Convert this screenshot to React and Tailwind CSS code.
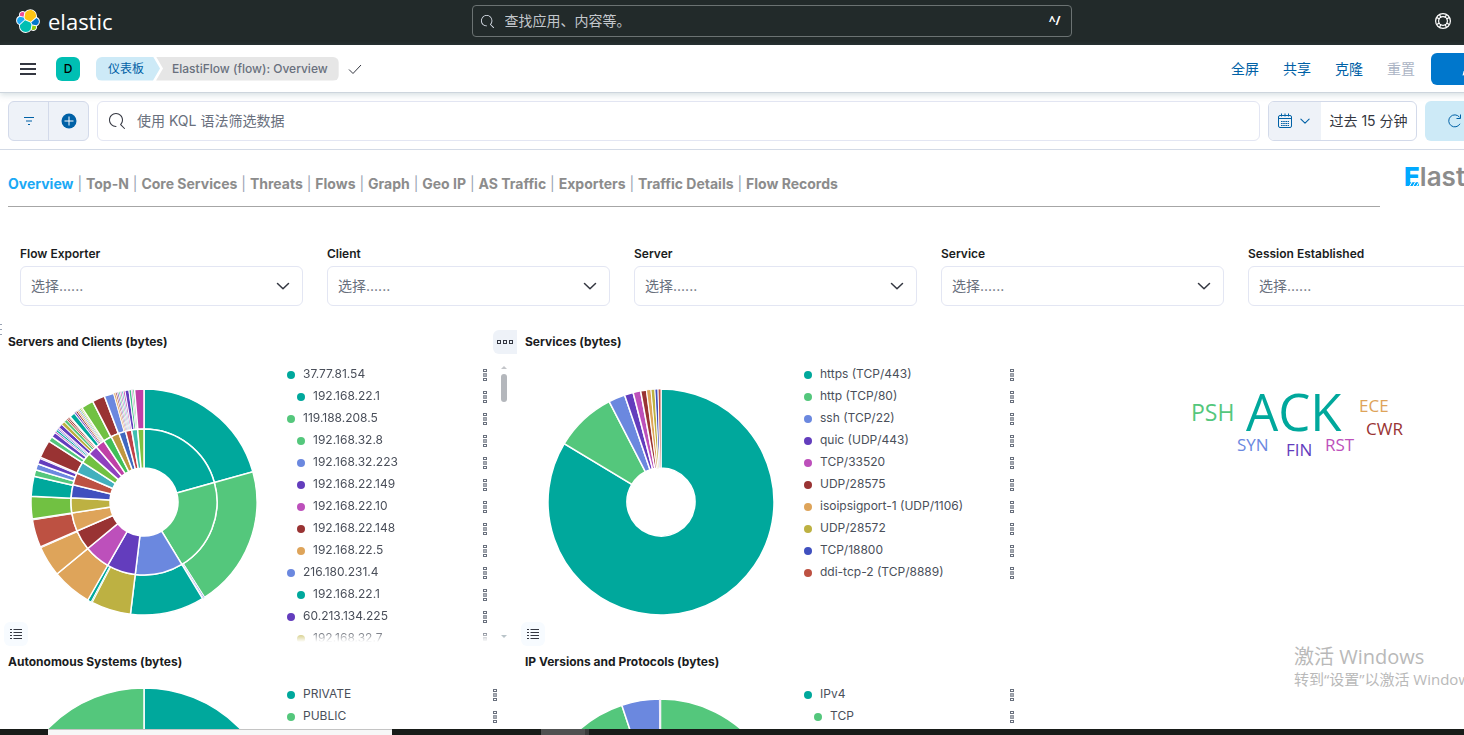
import React from "react";

const SERVER_INNER = [
  [0, 74.5, "#00a89c"],
  [74.5, 148.8, "#54c77c"],
  [148.8, 186.9, "#6b88df"],
  [186.9, 209.8, "#633dbd"],
  [209.8, 230.4, "#bd50bb"],
  [230.4, 246.6, "#993333"],
  [246.6, 261.4, "#dea45a"],
  [261.4, 273.3, "#bdb142"],
  [273.3, 283.7, "#4050bf"],
  [283.7, 293.4, "#bd5142"],
  [293.4, 302.8, "#42b0bd"],
  [302.8, 311.2, "#71c142"],
  [311.2, 319.1, "#8f40bf"],
  [319.1, 326.7, "#bf40a7"],
  [326.7, 333.4, "#40bf58"],
  [333.4, 340, "#bf9740"],
  [340, 345.4, "#4068bf"],
  [345.4, 350.3, "#bf4048"],
  [350.3, 355, "#40bfb0"],
  [355, 360, "#80bf40"],
];

const SERVER_OUTER = [
  [0, 74.5, "#00a89c"],
  [74.5, 147.6, "#54c77c"],
  [147.6, 148.3, "#6b88df"],
  [148.3, 148.8, "#633dbd"],
  [148.8, 186.9, "#00a89c"],
  [186.9, 207.4, "#bdb142"],
  [207.4, 207.9, "#54c77c"],
  [207.9, 209.8, "#00a89c"],
  [209.8, 230.4, "#dea45a"],
  [230.4, 246.2, "#dea45a"],
  [246.2, 246.6, "#bd50bb"],
  [246.6, 260.9, "#bd5142"],
  [260.9, 261.4, "#54c77c"],
  [261.4, 272.9, "#71c142"],
  [272.9, 283.2, "#00a89c"],
  [283.2, 286.6, "#54c77c"],
  [286.6, 289.8, "#6b88df"],
  [289.8, 292.8, "#633dbd"],
  [292.8, 293.4, "#bd50bb"],
  [293.4, 302.6, "#993333"],
  [302.6, 305.3, "#54c77c"],
  [305.3, 308, "#633dbd"],
  [308, 308.8, "#bd50bb"],
  [308.8, 309.8, "#00a89c"],
  [309.8, 310.6, "#6b88df"],
  [310.6, 311.2, "#bd50bb"],
  [311.2, 313.3, "#633dbd"],
  [313.3, 315.2, "#bdb142"],
  [315.2, 316.8, "#54c77c"],
  [316.8, 317.7, "#bd5142"],
  [317.7, 318.5, "#993333"],
  [318.5, 319.1, "#dea45a"],
  [319.1, 322, "#00a89c"],
  [322, 322.9, "#633dbd"],
  [322.9, 323.8, "#993333"],
  [323.8, 324.6, "#dea45a"],
  [324.6, 325.3, "#6b88df"],
  [325.3, 326, "#71c142"],
  [326, 326.7, "#bdb142"],
  [326.7, 333, "#71c142"],
  [333, 339.5, "#993333"],
  [339.5, 344.4, "#6b88df"],
  [344.4, 345.4, "#dea45a"],
  [345.4, 346.2, "#993333"],
  [346.2, 347, "#633dbd"],
  [347, 347.8, "#54c77c"],
  [347.8, 348.6, "#bd50bb"],
  [348.6, 349.4, "#42b0bd"],
  [349.4, 350.3, "#bf40a7"],
  [350.3, 352.3, "#633dbd"],
  [352.3, 353.6, "#40bf88"],
  [353.6, 354.3, "#bd50bb"],
  [354.3, 355.2, "#54c77c"],
  [355.2, 360, "#bf40a7"],
];

const SERVICES = [
  [0, 301.1, "#00a89c"],
  [301.1, 332.7, "#54c77c"],
  [332.7, 341.2, "#6b88df"],
  [341.2, 345.7, "#633dbd"],
  [345.7, 349.6, "#bd50bb"],
  [349.6, 352.6, "#993333"],
  [352.6, 354.9, "#dea45a"],
  [354.9, 356.9, "#bdb142"],
  [356.9, 358.5, "#4050bf"],
  [358.5, 360, "#bd5142"],
];

function arcPath(c, r0, r1, from, to) {
  const point = (r, deg) => {
    const a = (deg * Math.PI) / 180;
    return `${(c + r * Math.sin(a)).toFixed(2)} ${(c - r * Math.cos(a)).toFixed(2)}`;
  };
  const large = to - from > 180 ? 1 : 0;
  return `M${point(r1, from)}A${r1} ${r1} 0 ${large} 1 ${point(r1, to)}L${point(r0, to)}A${r0} ${r0} 0 ${large} 0 ${point(r0, from)}Z`;
}

function strokeFor(span) {
  if (span < 1.2) return 0.8;
  return span < 2.5 ? 1 : 1.5;
}

function Donut({ size, rings, label }) {
  const c = size / 2;
  return (
    <svg width={size} height={size} viewBox={`0 0 ${size} ${size}`} role="img" aria-label={label} className="shrink-0">
      {rings.map((ring) =>
        ring.slices.map(([from, to, color], i) => (
          <path
            key={ring.inner + "-" + i}
            d={arcPath(c, ring.inner, ring.outer, from, to)}
            fill={color}
            stroke="#fff"
            strokeWidth={strokeFor(to - from)}
          />
        ))
      )}
    </svg>
  );
}

const ELASTIC_PARTS = [
  ["#fec514", "M12.58 13.787l7.002 3.211 7.066-6.213a7.849 7.849 0 00.152-1.557c0-4.313-3.492-7.812-7.794-7.812a7.785 7.785 0 00-6.433 3.4l-1.176 6.122 1.183 2.849z"],
  ["#00bfb3", "M5.333 21.228A7.964 7.964 0 005.18 22.8c0 4.33 3.503 7.844 7.82 7.844a7.812 7.812 0 006.466-3.43l1.166-6.101-1.556-2.985-7.03-3.213-6.713 6.313z"],
  ["#f04e98", "M5.288 9.067l4.8 1.137L11.14 4.72a3.785 3.785 0 00-6.07 3.025c0 .45.075.9.218 1.322z"],
  ["#1ba9f5", "M4.872 10.214a5.294 5.294 0 00-3.512 5.004 5.318 5.318 0 003.394 4.96l6.734-6.116-1.236-2.652-5.38-1.196z"],
  ["#93c90e", "M20.873 27.247a3.743 3.743 0 002.273.779 3.785 3.785 0 003.582-5.042l-4.8-1.125-1.055 5.388z"],
  ["#0077cc", "M21.848 20.563l5.28 1.237a5.296 5.296 0 003.511-5.005 5.313 5.313 0 00-3.384-4.95l-6.905 6.07 1.498 2.648z"],
];

function ElasticMark() {
  return (
    <svg width="24" height="24" viewBox="0 0 32 32" aria-hidden="true">
      {ELASTIC_PARTS.map(([color, d]) => (
        <path key={color} d={d} fill="#fff" stroke="#fff" strokeWidth="2.4" />
      ))}
      {ELASTIC_PARTS.map(([color, d]) => (
        <path key={color} d={d} fill={color} />
      ))}
    </svg>
  );
}

function SearchIcon({ className }) {
  return (
    <svg viewBox="0 0 16 16" fill="currentColor" className={className} aria-hidden="true">
      <path d="M11.271 11.978l3.872 3.873a.502.502 0 00.708 0 .502.502 0 000-.708l-3.565-3.564c2.38-2.747 2.267-6.923-.342-9.532-2.73-2.73-7.17-2.73-9.898 0-2.728 2.729-2.728 7.17 0 9.9a6.955 6.955 0 004.949 2.05.5.5 0 000-1 5.96 5.96 0 01-4.242-1.757 6.01 6.01 0 010-8.486 6.004 6.004 0 018.484 0 6.01 6.01 0 010 8.486.5.5 0 00.034.738z" />
    </svg>
  );
}

function Chevron({ className }) {
  return (
    <svg viewBox="0 0 16 16" fill="none" stroke="currentColor" strokeLinecap="round" strokeLinejoin="round" className={className} aria-hidden="true">
      <path d="M2.5 5.5 8 10.8l5.5-5.3" />
    </svg>
  );
}

function HelpIcon() {
  return (
    <svg width="16" height="16" viewBox="0 0 16 16" fill="none" stroke="currentColor" strokeWidth="1.2" aria-hidden="true">
      <circle cx="8" cy="8" r="7.4" />
      <circle cx="8" cy="8" r="4.400" />
      <path d="M1.800 4.600l2.900 1.400M4.600 1.800l1.400 2.900M14.200 4.600l-2.900 1.400M11.400 1.800l-1.400 2.900M1.800 11.400l2.900-1.400M4.600 14.200l1.400-2.900M14.200 11.400l-2.900-1.400M11.400 14.200l-1.400-2.900" />
    </svg>
  );
}

function CalendarIcon() {
  return (
    <svg width="16" height="16" viewBox="0 0 16 16" fill="none" stroke="currentColor" aria-hidden="true">
      <rect x="1.5" y="2.5" width="13" height="12" rx="1.5" />
      <path d="M1.5 5.5h13M4.5 .5v3M8 .5v3M11.5 .5v3" />
      <path d="M4 8.5h8M4 10.5h8M4 12.5h8" strokeDasharray="1.6 .6" />
    </svg>
  );
}

function ListIcon() {
  return (
    <svg width="16" height="16" viewBox="0 0 16 16" stroke="#343741" aria-hidden="true">
      <path d="M2 3.5h2M5.500 3.5H14M2 6.5h2M5.500 6.5H14M2 9.500h2M5.500 9.500H14M2 12.500h2M5.500 12.500H14" />
    </svg>
  );
}

function Header() {
  return (
    <header className="grid h-[45px] shrink-0 grid-cols-[minmax(0,1fr)_600px_minmax(0,1fr)] items-center bg-[#222a2a] pr-6 pb-[3px] pl-4">
      <a href="#home" className="flex items-center gap-2 text-white">
        <ElasticMark />
        <span className="font-['Open_Sans',sans-serif] text-[22px] leading-6">elastic</span>
      </a>
      <label className="flex h-8 items-center gap-[11px] rounded border border-[#6b7272] pr-[10px] pl-2 text-[#dfe5ef]">
        <SearchIcon className="h-[13px] w-[13px]" />
        <input
          aria-label="查找应用、内容等。"
          placeholder="查找应用、内容等。"
          className="min-w-0 flex-1 bg-transparent text-sm outline-none placeholder:text-[#c3c7cc]"
        />
        <kbd className="font-sans text-xs font-bold text-white">^/</kbd>
      </label>
      <div className="flex justify-end pr-[76px]">
        <button type="button" aria-label="Help" className="text-white">
          <HelpIcon />
        </button>
      </div>
    </header>
  );
}

function NavBar() {
  return (
    <nav className="relative z-10 flex h-12 shrink-0 items-center border-b border-[#cdd5dd] bg-white pr-2 pl-5 shadow-[0_2px_6px_rgba(120,150,160,0.3)]">
      <button type="button" aria-label="Menu" className="flex w-4 flex-col gap-[3px]">
        <span className="h-[2px] bg-[#343741]" />
        <span className="h-[2px] bg-[#343741]" />
        <span className="h-[2px] bg-[#343741]" />
      </button>
      <button type="button" className="ml-5 h-6 w-6 rounded-md bg-[#00bfb3] text-xs font-medium text-black">D</button>
      <ol className="ml-4 flex items-center text-xs">
        <li>
          <a
            href="#dashboards"
            className="block h-6 rounded-l-md bg-[#cdeaf7] pr-4 pl-3 leading-6 text-[#0061a6] [clip-path:polygon(0_0,calc(100%_-_7px)_0,100%_50%,calc(100%_-_7px)_100%,0_100%)]"
          >
            仪表板
          </a>
        </li>
        <li className="-ml-1 h-6 rounded-r-md bg-[#e6e6e6] pr-[11px] pl-4 leading-6 font-medium text-[#69707d] [clip-path:polygon(0_0,100%_0,100%_100%,0_100%,7px_50%)]">
          ElastiFlow (flow): Overview
        </li>
      </ol>
      <svg width="16" height="16" viewBox="0 0 16 16" fill="none" stroke="#343741" className="ml-2" aria-hidden="true">
        <path d="M2 8.500l4 4L14 4" />
      </svg>
      <div className="ml-auto flex shrink-0 items-center gap-6 text-sm text-[#0061a6]">
        <button type="button">全屏</button>
        <button type="button">共享</button>
        <button type="button">克隆</button>
        <button type="button" disabled className="text-[#abb4c4]">重置</button>
        <button type="button" className="-ml-2 flex h-8 w-28 items-center justify-center gap-2 rounded-md bg-[#0077cc] font-medium text-white">
          <svg width="16" height="16" viewBox="0 0 16 16" fill="currentColor" aria-hidden="true">
            <path d="M11.500 1.500l3 3-9 9-4 1 1-4z" />
          </svg>
          编辑
        </button>
      </div>
    </nav>
  );
}

function QueryBar() {
  return (
    <form className="flex h-[57px] shrink-0 items-center gap-2 border-b border-[#d3dae6] px-2" onSubmit={(e) => e.preventDefault()}>
      <div className="flex h-10 w-[81px] shrink-0 divide-x divide-[#d3daea] rounded-md border border-[#d3daea] bg-[#eef2f8] text-[#0061a6]">
        <button type="button" aria-label="Filters" className="flex flex-1 items-center justify-center">
          <svg width="12" height="12" viewBox="0 0 12 12" stroke="currentColor" aria-hidden="true">
            <path d="M1 2.500h10M3 6h6M5 9.500h2" />
          </svg>
        </button>
        <button type="button" aria-label="Add filter" className="flex flex-1 items-center justify-center">
          <svg width="16" height="16" viewBox="0 0 16 16" aria-hidden="true">
            <circle cx="8" cy="8" r="7.500" fill="#0061a6" />
            <path d="M8 3.500v9M3.500 8h9" stroke="#fff" />
          </svg>
        </button>
      </div>
      <label className="flex h-10 min-w-0 flex-1 items-center gap-3 rounded-md border border-[#e3e6f3] px-[11px] text-[#343741]">
        <SearchIcon className="h-4 w-4" />
        <input
          aria-label="使用 KQL 语法筛选数据"
          placeholder="使用 KQL 语法筛选数据"
          className="min-w-0 flex-1 bg-transparent text-sm outline-none placeholder:text-[#69707d]"
        />
      </label>
      <div className="flex h-10 w-[149px] shrink-0 overflow-hidden rounded-md border border-[#d3daea]">
        <button type="button" aria-label="Date quick select" className="flex w-[52px] shrink-0 items-center gap-[6px] bg-[#eef2f8] pl-2 text-[#0061a6]">
          <CalendarIcon />
          <Chevron className="h-3 w-3 stroke-[1.5]" />
        </button>
        <button type="button" className="flex-1 text-sm whitespace-nowrap text-[#343741]">过去 15 分钟</button>
      </div>
      <button type="button" className="flex h-10 w-[118px] shrink-0 items-center gap-2 rounded-md bg-[#cdeaf7] pl-[22px] text-sm font-medium text-[#0061a6]">
        <svg width="16" height="16" viewBox="0 0 16 16" fill="none" stroke="currentColor" aria-hidden="true">
          <path d="M12.500 4.200A6 6 0 1 0 13 10.800M13.500 1.500v4h-4" />
        </svg>
        刷新
      </button>
    </form>
  );
}

const TABS = ["Overview", "Top-N", "Core Services", "Threats", "Flows", "Graph", "Geo IP", "AS Traffic", "Exporters", "Traffic Details", "Flow Records"];

function TabRow() {
  return (
    <div className="flex h-[82px] shrink-0 gap-6 px-2 pt-3">
      <div className="h-[45px] flex-1 border-b border-[#a6a6a6] pt-3">
        <ul className="flex items-center text-sm font-bold whitespace-nowrap text-[#8c8c8c]">
          {TABS.map((tab, i) => (
            <li key={tab} className="whitespace-pre">
              {i > 0 && <span className="font-normal text-[#98a2b3]">{" | "}</span>}
              <a href={"#" + tab} className={i === 0 ? "text-[#1ba9f5]" : ""}>
                {tab}
              </a>
            </li>
          ))}
        </ul>
      </div>
      <div className="w-[139px] text-[26px] leading-[30px] font-semibold text-[#8c8c8c]">
        <span className="relative inline-block font-extrabold text-[#00a9ff]">
          E
          <svg width="12" height="5" viewBox="0 0 12 5" stroke="#fff" className="absolute right-0 bottom-[5px]" aria-hidden="true">
            <path d="M1 5l3-5M4.500 5l3-5M8 5l3-5" />
          </svg>
        </span>
        lastiFlow
      </div>
    </div>
  );
}

function Controls() {
  return (
    <div className="grid shrink-0 grid-cols-5 gap-6 px-5 pt-[14px]">
      {["Flow Exporter", "Client", "Server", "Service", "Session Established"].map((name) => (
        <label key={name} className="block text-xs font-semibold text-[#1a1c21]">
          <span className="block pb-1">{name}</span>
          <span className="relative block">
            <select className="h-10 w-full appearance-none rounded-md border border-[#e3e6f3] bg-white px-[10px] text-sm font-normal text-[#69707d]">
              <option>选择......</option>
            </select>
            <Chevron className="pointer-events-none absolute top-3 right-3 h-4 w-4 stroke-[1.5] text-[#343741]" />
          </span>
        </label>
      ))}
    </div>
  );
}

function Legend({ items, scroll }) {
  return (
    <div className={scroll ? "flex min-w-0 flex-1 self-start pr-[10px]" : "min-w-0 flex-1 self-start pr-5"}>
      <ul
        className={
          scroll
            ? "h-[288px] flex-1 overflow-hidden pt-[9px] [mask-image:linear-gradient(to_top,transparent,black_12px)]"
            : "pt-[9px]"
        }
      >
        {items.map(([name, color, depth], i) => (
          <li key={i} className={depth ? "flex h-[22px] items-center gap-2 pl-[10px]" : "flex h-[22px] items-center gap-2"}>
            <span className="mt-px h-2 w-2 shrink-0 rounded-full" style={{ backgroundColor: color }} />
            <span className="text-xs whitespace-nowrap text-[#4a4f5a]">{name}</span>
            <button type="button" aria-label={"Options for " + name} className="mt-px ml-auto text-[#69707d]">
              <svg width="4" height="12" viewBox="0 0 4 12" fill="none" stroke="currentColor" aria-hidden="true">
                <rect x=".5" y=".5" width="3" height="2" />
                <rect x=".5" y="4.500" width="3" height="3" fill="#a9adb5" strokeOpacity=".6" />
                <rect x=".5" y="9.500" width="3" height="2" />
              </svg>
            </button>
          </li>
        ))}
      </ul>
      {scroll && (
        <div className="ml-[14px] flex h-[288px] w-[6px] flex-col items-center pt-3 pb-1" aria-hidden="true">
          <svg width="6" height="3" viewBox="0 0 6 3" fill="#c3c5c9">
            <path d="M3 0l3 3H0z" />
          </svg>
          <div className="mt-[5px] h-7 w-[6px] rounded-full bg-[#b4b7bc]" />
          <svg width="6" height="3" viewBox="0 0 6 3" fill="#b9c4c9" className="mt-auto">
            <path d="M0 0h6L3 3z" />
          </svg>
        </div>
      )}
    </div>
  );
}

function Panel({ title, size, rings, items, scroll, options }) {
  return (
    <section className="relative h-[320px]">
      <div className="flex h-6 items-center pl-2">
        <h2 className="flex-1 text-xs font-bold text-[#1a1c21]">{title}</h2>
        {options && (
          <button type="button" aria-label="Panel options" className="flex h-6 w-6 items-center justify-center rounded-l-md bg-[#eef2f8]">
            <svg width="16" height="4" viewBox="0 0 16 4" fill="none" stroke="#343741" aria-hidden="true">
              <rect x=".5" y=".5" width="3" height="3" />
              <rect x="6.500" y=".5" width="3" height="3" />
              <rect x="12.500" y=".5" width="3" height="3" />
            </svg>
          </button>
        )}
      </div>
      <div className="flex h-[295px] items-center">
        <div className="flex w-[287px] shrink-0 justify-center">
          <Donut size={size} rings={rings} label={title} />
        </div>
        <Legend items={items} scroll={scroll} />
      </div>
      <button type="button" aria-label="Toggle legend" className="absolute bottom-1 left-1 flex h-6 w-6 items-center justify-center rounded-md bg-[#f7fbff]">
        <ListIcon />
      </button>
    </section>
  );
}

const PANELS = [
  {
    title: "Servers and Clients (bytes)",
    size: 226,
    scroll: true,
    options: true,
    rings: [
      { inner: 73, outer: 113, slices: SERVER_OUTER },
      { inner: 34, outer: 73, slices: SERVER_INNER },
    ],
    items: [
      ["37.77.81.54", "#00a89c", 0],
      ["192.168.22.1", "#00a89c", 1],
      ["119.188.208.5", "#54c77c", 0],
      ["192.168.32.8", "#54c77c", 1],
      ["192.168.32.223", "#6b88df", 1],
      ["192.168.22.149", "#633dbd", 1],
      ["192.168.22.10", "#bd50bb", 1],
      ["192.168.22.148", "#993333", 1],
      ["192.168.22.5", "#dea45a", 1],
      ["216.180.231.4", "#6b88df", 0],
      ["192.168.22.1", "#00a89c", 1],
      ["60.213.134.225", "#633dbd", 0],
      ["192.168.32.7", "#bdb142", 1],
    ],
  },
  {
    title: "Services (bytes)",
    size: 226,
    rings: [{ inner: 34, outer: 113, slices: SERVICES }],
    items: [
      ["https (TCP/443)", "#00a89c", 0],
      ["http (TCP/80)", "#54c77c", 0],
      ["ssh (TCP/22)", "#6b88df", 0],
      ["quic (UDP/443)", "#633dbd", 0],
      ["TCP/33520", "#bd50bb", 0],
      ["UDP/28575", "#993333", 0],
      ["isoipsigport-1 (UDP/1106)", "#dea45a", 0],
      ["UDP/28572", "#bdb142", 0],
      ["TCP/18800", "#4050bf", 0],
      ["ddi-tcp-2 (TCP/8889)", "#bd5142", 0],
    ],
  },
];

const LOWER_PANELS = [
  {
    title: "Autonomous Systems (bytes)",
    size: 268,
    rings: [{ inner: 40, outer: 134, slices: [[0, 180, "#00a89c"], [180, 360, "#54c77c"]] }],
    items: [
      ["PRIVATE", "#00a89c", 0],
      ["PUBLIC", "#54c77c", 0],
    ],
  },
  {
    title: "IP Versions and Protocols (bytes)",
    size: 245,
    rings: [{ inner: 76, outer: 122.5, slices: [[0, 341.6, "#54c77c"], [341.6, 359.6, "#6b88df"], [359.6, 360, "#633dbd"]] }],
    items: [
      ["IPv4", "#00a89c", 0],
      ["TCP", "#54c77c", 1],
    ],
  },
];

function TagCloud() {
  return (
    <section aria-label="TCP flags" className="relative h-[320px] font-['Open_Sans',sans-serif] text-[17px] leading-4">
      <span className="absolute top-[70px] left-[157px] text-[23px] leading-6 text-[#54c77c]">PSH</span>
      <span className="absolute top-[60px] left-[212px] text-[51px] leading-[42px] text-[#00a89c]">ACK</span>
      <span className="absolute top-[68px] left-[325px] text-[#dea45a]">ECE</span>
      <span className="absolute top-[91px] left-[332px] text-[#993333]">CWR</span>
      <span className="absolute top-[107px] left-[203px] text-[#6b88df]">SYN</span>
      <span className="absolute top-[112px] left-[252px] text-[#633dbd]">FIN</span>
      <span className="absolute top-[107px] left-[291px] text-[#bd50bb]">RST</span>
    </section>
  );
}

export default function App() {
  return (
    <div className="relative flex h-screen flex-col overflow-hidden bg-white font-['Inter','Noto_Sans_CJK_SC',sans-serif]">
      <div className="flex min-h-0 w-[calc(100%_+_87px)] flex-1 flex-col overflow-hidden">
        <Header />
        <NavBar />
        <QueryBar />
        <main className="min-h-0 flex-1 overflow-hidden">
          <TabRow />
          <Controls />
          <div className="relative mt-6 grid grid-cols-3">
            <div className="absolute -top-[6px] left-0 flex w-[2px] flex-col gap-1" aria-hidden="true">
              <span className="h-px bg-[#98a2b3]" />
              <span className="h-px bg-[#98a2b3]" />
              <span className="h-px bg-[#98a2b3]" />
            </div>
            {PANELS.map((p) => (
              <Panel key={p.title} {...p} />
            ))}
            <TagCloud />
            {LOWER_PANELS.map((p) => (
              <Panel key={p.title} {...p} />
            ))}
          </div>
        </main>
      </div>
      <div className="flex h-[6px] shrink-0 bg-[#181c19]" aria-hidden="true">
        <div className="ml-12 w-[344px] border-t border-[#c4c4c4] bg-[#f7f7f7]" />
        <div className="ml-[149px] w-11 bg-[#505151]" />
        <div className="w-1 bg-[#3a3c3b]" />
      </div>
      <div className="pointer-events-none absolute top-[645px] left-[1294px] font-['Open_Sans','Noto_Sans_CJK_SC',sans-serif] whitespace-nowrap text-[#b9b9b9]">
        <p className="text-xl leading-[23px]">激活 Windows</p>
        <p className="text-[15px] leading-[23px]">转到“设置”以激活 Windows。</p>
      </div>
    </div>
  );
}
